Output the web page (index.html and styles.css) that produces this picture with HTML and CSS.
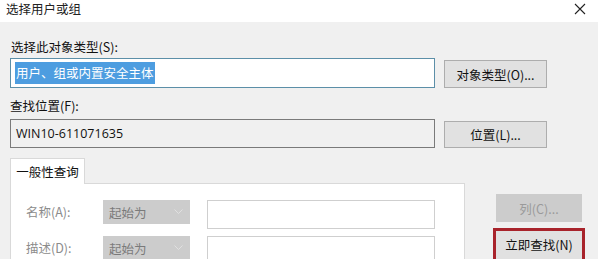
FILE: index.html
```html
<!DOCTYPE html>
<html lang="zh-CN">
<head>
<meta charset="utf-8">
<title>选择用户或组</title>
<link rel="stylesheet" href="styles.css">
</head>
<body>
<div class="window">
  <div class="titlebar">
    <span class="title">选择用户或组</span>
    <svg class="close" width="12" height="12" viewBox="0 0 12 12"><path d="M1 1 L11 11 M11 1 L1 11" stroke="#222" stroke-width="1.1" fill="none"/></svg>
  </div>
  <div class="body">
    <div class="label">选择此对象类型(S):</div>
    <div class="row r1">
      <div class="field focus"><span class="sel">用户、组或内置安全主体</span></div>
      <div class="btn b1">对象类型(O)...</div>
    </div>
    <div class="label l2">查找位置(F):</div>
    <div class="row r2">
      <div class="field ro">WIN10-611071635</div>
      <div class="btn b2">位置(L)...</div>
    </div>
    <div class="lower">
      <div class="tabarea">
        <div class="tab">一般性查询</div>
        <div class="panel">
          <div class="qrow">
            <span class="qlabel">名称(A):</span>
            <div class="select">起始为<svg class="chev" width="9" height="6" viewBox="0 0 9 6"><path d="M0.5 0.5 L4.5 4.5 L8.5 0.5" stroke="#e0e0e0" stroke-width="1" fill="none"/></svg></div>
            <div class="qinput"></div>
          </div>
          <div class="qrow q2">
            <span class="qlabel">描述(D):</span>
            <div class="select">起始为<svg class="chev" width="9" height="6" viewBox="0 0 9 6"><path d="M0.5 0.5 L4.5 4.5 L8.5 0.5" stroke="#e0e0e0" stroke-width="1" fill="none"/></svg></div>
            <div class="qinput"></div>
          </div>
        </div>
      </div>
      <div class="side">
        <div class="btn dis">列(C)...</div>
        <div class="mark"><div class="btn go">立即查找(N)</div></div>
      </div>
    </div>
  </div>
</div>
</body>
</html>
```

FILE: styles.css
```css
html, body {
  margin: 0;
  padding: 0;
  background: #f0f0f0;
}
body {
  width: 598px;
  height: 259px;
  overflow: hidden;
  font-family: "Noto Sans CJK SC", "Noto Sans", sans-serif;
  font-size: 12px;
  color: #111;
}
.titlebar {
  height: 22px;
  box-sizing: border-box;
  background: #ffffff;
  display: flex;
  align-items: flex-start;
  justify-content: space-between;
  padding: 0 12px 0 6px;
}
.title {
  font-size: 12.5px;
  line-height: 16px;
  padding-top: 1px;
  color: #222;
}
.close {
  margin-top: 3px;
}
.body {
  padding: 17px 0 0 10px;
}
.label {
  line-height: 16px;
  height: 16px;
  margin-bottom: 3px;
  padding-left: 1px;
  font-size: 12.5px;
}
.l2 {
  margin-top: 10px;
  margin-bottom: 5px;
  padding-left: 0;
}
.row {
  display: flex;
  align-items: center;
  gap: 9px;
}
.field {
  box-sizing: border-box;
  width: 425px;
  display: flex;
  align-items: center;
  padding-left: 4px;
}
.r1 .field {
  height: 30px;
}
.r2 .field {
  height: 29px;
}
.focus {
  background: #ffffff;
  border: 1px solid #5c8fa8;
}
.sel {
  background: #4d9de0;
  color: #ffffff;
  font-size: 12.5px;
  line-height: 22px;
  padding: 0 1px;
}
.ro {
  background: #f0f0f0;
  border: 1px solid #7a7a7a;
  font-family: "Open Sans", "Noto Sans", sans-serif;
  font-size: 12.5px;
  padding-left: 5px;
  color: #111;
}
.btn {
  box-sizing: border-box;
  background: #e1e1e1;
  border: 1px solid #adadad;
  display: flex;
  align-items: center;
  justify-content: center;
  font-size: 12.5px;
  color: #111;
}
.b1 {
  width: 103px;
  height: 28px;
  margin-top: 2px;
}
.b2 {
  width: 103px;
  height: 27px;
  margin-top: 2px;
}
.lower {
  display: flex;
  margin-top: 10px;
}
.tabarea {
  width: 455px;
}
.tab {
  box-sizing: border-box;
  width: 75px;
  height: 26px;
  background: #ffffff;
  border: 1px solid #d9d9d9;
  border-bottom: none;
  display: flex;
  align-items: center;
  justify-content: center;
  font-size: 12.5px;
  margin-bottom: -1px;
  position: relative;
}
.panel {
  box-sizing: border-box;
  height: 80px;
  background: #ffffff;
  border: 1px solid #d9d9d9;
  border-bottom: none;
  padding: 16px 0 0 15px;
}
.qrow {
  display: flex;
  align-items: flex-start;
}
.q2 {
  margin-top: 7px;
}
.qlabel {
  width: 77px;
  line-height: 24px;
  color: #8c8c8c;
  font-size: 12.5px;
}
.select {
  box-sizing: border-box;
  width: 87px;
  height: 24px;
  background: #cccccc;
  color: #7a7a7a;
  display: flex;
  align-items: center;
  justify-content: space-between;
  padding: 0 4px 0 6px;
  font-size: 12.5px;
}
.chev {
  margin-right: 3px;
}
.qinput {
  box-sizing: border-box;
  width: 228px;
  height: 29px;
  margin-left: 17px;
  background: #ffffff;
  border: 1px solid #cfcfcf;
}
.side {
  margin-left: 31px;
  padding-top: 36px;
  display: flex;
  flex-direction: column;
}
.dis {
  width: 86px;
  height: 28px;
  background: #cccccc;
  border-color: #cccccc;
  color: #9a9a9a;
}
.mark {
  margin-top: 6px;
  margin-left: -3px;
  width: 92px;
  height: 40px;
  box-sizing: border-box;
  border: 3px solid #a8232b;
  display: flex;
}
.go {
  width: 86px;
  height: 34px;
  border: none;
  background: #e1e1e1;
  align-items: flex-start;
  padding-top: 4px;
}
```
